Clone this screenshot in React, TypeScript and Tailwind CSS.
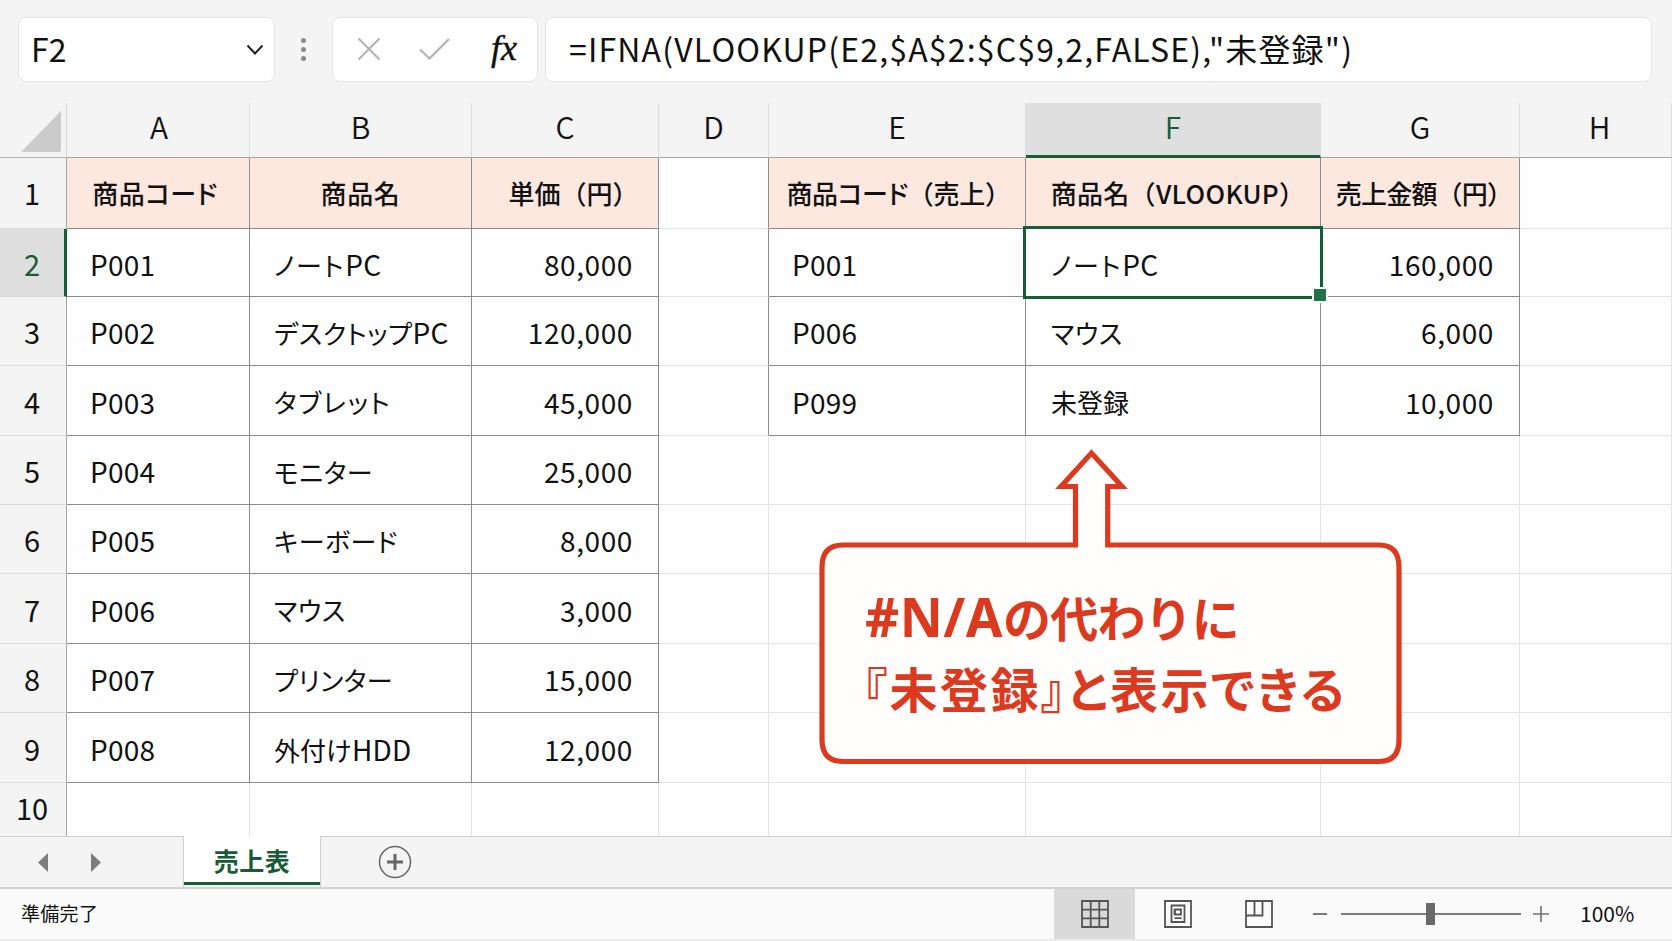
import clsx from "clsx";

type Cell = { text: string; header?: string; right?: boolean };

const columns = ["A", "B", "C", "D", "E", "F", "G", "H"];

const products = [
  ["P001", "ノートPC", "80,000"],
  ["P002", "デスクトップPC", "120,000"],
  ["P003", "タブレット", "45,000"],
  ["P004", "モニター", "25,000"],
  ["P005", "キーボード", "8,000"],
  ["P006", "マウス", "3,000"],
  ["P007", "プリンター", "15,000"],
  ["P008", "外付けHDD", "12,000"],
];

const sales = [
  ["P001", "ノートPC", "160,000"],
  ["P006", "マウス", "6,000"],
  ["P099", "未登録", "10,000"],
];

const productHeads = [
  ["商品コード", "pr-1.5 tracking-[0.5px]"],
  ["商品名", "tracking-[0.6px]"],
  ["単価（円）", "pl-[17px]"],
];
const salesHeads = [
  ["商品コード（売上）", "pl-[3px] tracking-[-0.3px]"],
  ["商品名（VLOOKUP）", "pl-2.5 tracking-[0.3px]"],
  ["売上金額（円）", "pl-2 tracking-[-0.8px]"],
];

function getCell(row: number, col: number): Cell | null {
  const left = col < 3;
  const i = left ? col : col - 4;
  if (i < 0 || i > 2) return null;
  if (row === 1) {
    const [text, header] = (left ? productHeads : salesHeads)[i];
    return { text, header };
  }
  const text = (left ? products : sales)[row - 2]?.[i];
  return text ? { text, right: i === 2 } : null;
}

// Katakana is set proportionally, latin runs a little larger than kanji
function CellText({ text, header, right }: Cell) {
  return (
    <span>
      {text.split(/([\x20-\x7e]+|[ァ-ー]+)/).map((part, i) => {
        if (/^[ァ-ー]/.test(part)) {
          return (
            <span
              key={i}
              className={clsx(
                "[font-feature-settings:'palt']",
                !header && (part.endsWith("ト") ? "tracking-[1.7px]" : "tracking-[0.5px]")
              )}
            >
              {part}
            </span>
          );
        }
        if (!header && /^[\x20-\x7e]/.test(part)) {
          return (
            <span key={i} className={clsx("text-[28px]", right ? "tracking-[0.6px]" : "tracking-[0.2px]")}>
              {part}
            </span>
          );
        }
        return part;
      })}
    </span>
  );
}

function FormulaBar() {
  return (
    <div className="flex h-[103px] items-start pt-[17px] pl-[18px] text-[32px]">
      <div className="flex h-[65px] w-[257px] items-center justify-between rounded-lg border border-[#e4e4e4] bg-white pr-2.5 pl-3">
        <span className="pb-[3px] text-[32px]">F2</span>
        <svg width="18" height="12" viewBox="0 0 18 12" fill="none">
          <path d="M1.5 1.5 9 9.5l7.5-8" stroke="#222" strokeWidth="2" />
        </svg>
      </div>
      <div className="flex h-[65px] w-[57px] flex-col items-center justify-center gap-1">
        <i className="size-[5px] rounded-full bg-[#8a8a8a]" />
        <i className="size-[5px] rounded-full bg-[#8a8a8a]" />
        <i className="size-[5px] rounded-full bg-[#8a8a8a]" />
      </div>
      <div className="flex h-[65px] w-[206px] items-center rounded-lg border border-[#e4e4e4] bg-white pb-0.5 pl-6">
        <svg width="24" height="24" viewBox="0 0 24 24" fill="none">
          <path d="M1.500 1.500l21 21M22.500 1.500l-21 21" stroke="#b3b3b3" strokeWidth="2" />
        </svg>
        <svg className="ml-[38px]" width="31" height="24" viewBox="0 0 31 24" fill="none">
          <path d="M1 12.500l9.500 9L30 2" stroke="#b3b3b3" strokeWidth="2.200" />
        </svg>
        <span className="mb-0.5 ml-[41px] font-['Liberation_Serif',serif] text-[36px] leading-none italic [-webkit-text-stroke:0.4px]">
          fx
        </span>
      </div>
      <div className="ml-[7px] flex h-[65px] w-[1107px] items-center rounded-lg border border-[#e4e4e4] bg-white pb-[3px] pl-[23px]">
        <span className="tracking-[1.17px] whitespace-nowrap">
          =IFNA(VLOOKUP(E2,$A$2:$C$9,2,FALSE),"未登録")
        </span>
      </div>
    </div>
  );
}

function ColumnHeads() {
  return (
    <>
      <div className="flex items-end justify-end border-r border-b border-r-[#d4d4d4] border-b-[#b5b5b5] pr-[5px] pb-[5px]">
        <svg width="40" height="41" viewBox="0 0 40 41">
          <path d="M40 0v39.500q0 1.500-1.500 1.500H0z" fill="#cbcbcb" />
        </svg>
      </div>
      {columns.map((name) => (
        <div
          key={name}
          className={clsx(
            "flex items-center justify-center border-r border-r-[#dcdcdc] pb-[7px] text-[30px] font-[350]",
            name === "F"
              ? "border-b-[3px] border-b-[#185c37] bg-[#dfdfdf] pt-0.5 text-[#185c37]"
              : "border-b border-b-[#a6a6a6]",
            name === "A" && "pl-0.5",
            name === "H" && "pl-2"
          )}
        >
          {name}
        </div>
      ))}
    </>
  );
}

function Row({ row }: { row: number }) {
  const selectedRow = row === 2;
  return (
    <>
      <div
        className={clsx(
          "flex items-center justify-center border-b border-b-[#dcdcdc] text-[29px]",
          selectedRow
            ? "border-r-[3px] border-r-[#185c37] bg-[#dfdfdf] text-[#185c37]"
            : "border-r border-r-[#a6a6a6] pr-0.5",
          row === 1 && "pb-0.5",
          row === 10 ? "border-b-0 pb-1" : "pt-0.5"
        )}
      >
        {row}
      </div>
      {columns.map((name, col) => {
        const cell = getCell(row, col);
        const selected = selectedRow && name === "F";
        const darkRight = cell || getCell(row, col + 1);
        return (
          <div
            key={name}
            className={clsx(
              "relative flex items-center border-r border-b whitespace-nowrap",
              darkRight ? "border-r-[#8c8c8c]" : "border-r-[#e4e4e4]",
              cell ? "border-b-[#8c8c8c]" : "border-b-[#e4e4e4]",
              row === 10 && "border-b-0",
              cell?.header
                ? "justify-center bg-[#fce8df] pb-0.5 text-[26px] font-medium"
                : "bg-[#fefefe] pt-0.5 pr-[25px] text-[26px]",
              cell?.header,
              !cell?.header && (name === "F" ? "pl-[25px]" : name === "B" ? "pl-6" : "pl-[23px]"),
              cell?.right && "justify-end"
            )}
          >
            {cell && <CellText {...cell} />}
            {selected && (
              <div className="absolute -top-[3px] -right-[3px] -bottom-[3px] -left-[3px] z-10 border-[3px] border-[#185c37]">
                <div className="absolute -right-[8px] -bottom-[7px] size-4 border-2 border-white bg-[#217346]" />
              </div>
            )}
          </div>
        );
      })}
    </>
  );
}

function Callout() {
  return (
    <div className="absolute top-[346px] left-[819px] h-[316px] w-[584px] text-[#dc3a1f]">
      <svg className="absolute inset-0" width="584" height="316" viewBox="0 0 584 316">
        <path
          d="M24 96H256.500V37.500H242L272.500 4L303 37.500H288.700V96H560Q580 96 580 118V291Q580 312.500 560 312.500H24Q3 312.500 3 291V118Q3 96 24 96Z"
          fill="#fffefd"
          stroke="currentColor"
          strokeWidth="5.200"
        />
      </svg>
      <div className="absolute top-[132px] left-[46px] text-[48px] leading-[70px] font-bold whitespace-nowrap">
        <p className="tracking-[-0.8px]">
          <span className="font-['Noto_Sans',sans-serif] text-[53px] tracking-[0.5px]">#N/A</span>
          の代わりに
        </p>
        <p className="-ml-0.5 tracking-[2.500px] [font-feature-settings:'palt']">『未登録』と表示できる</p>
      </div>
    </div>
  );
}

function SheetTabs() {
  return (
    <div className="flex h-[53px] border-b-2 border-[#d2d2d2]">
      <div className="flex w-[184px] items-center gap-[43px] border-t border-r border-[#cfcfcf] pl-[38px]">
        <svg width="10" height="19" viewBox="0 0 10 19">
          <path d="M10 0v19L0 9.500z" fill="#7d7d7d" />
        </svg>
        <svg width="10" height="19" viewBox="0 0 10 19">
          <path d="M0 0v19l10-9.500z" fill="#7d7d7d" />
        </svg>
      </div>
      <div className="flex h-[49px] w-[136px] items-center justify-center border-b-[3px] border-[#185c37] bg-white pt-[3px] text-[25px] font-bold tracking-[0.5px] text-[#185c37]">
        売上表
      </div>
      <div className="flex flex-1 items-center border-t border-l border-[#cfcfcf] pl-[57px]">
        <svg width="34" height="34" viewBox="0 0 34 34" fill="none" stroke="#666">
          <circle cx="17" cy="17" r="15.500" strokeWidth="1.500" />
          <path d="M17 9v16M9 17h16" strokeWidth="3" />
        </svg>
      </div>
    </div>
  );
}

function StatusBar() {
  return (
    <div className="flex h-[52px] items-center border-b-2 border-[#ebebeb] bg-[#fafafa] pl-[21px]">
      <span className="w-[1033px] pb-0.5 text-[19px] tracking-[0.3px]">準備完了</span>
      <div className="flex h-full w-[81px] items-center justify-center bg-[#dadada]">
        <svg width="28" height="28" viewBox="0 0 28 28" fill="none" stroke="#555" strokeWidth="1.800">
          <path d="M1 1h26v26H1zM1 9.700h26M1 18.300h26M9.700 1v26M18.300 1v26" />
        </svg>
      </div>
      <svg className="ml-[29px]" width="28" height="28" viewBox="0 0 28 28" fill="none" stroke="#555" strokeWidth="1.800">
        <path d="M1 1h26v26H1zM7.500 5.500h13v16.500h-13zM11 9.500h6v5h-6zM10.500 9v6M10.500 18.200h7" />
      </svg>
      <svg className="ml-[53px]" width="28" height="28" viewBox="0 0 28 28" fill="none" stroke="#555" strokeWidth="1.800">
        <path d="M1 1h26v26H1zM1 15.500h16.500V1M9.500 1v14.500" />
      </svg>
      <i className="ml-10 h-0.5 w-[14px] bg-[#7a7a7a]" />
      <div className="relative ml-[14px] h-0.5 w-[180px] bg-[#7a7a7a]">
        <i className="absolute -top-[10px] left-[85px] h-[22px] w-[9px] bg-[#696969]" />
      </div>
      <svg className="ml-[12px]" width="16" height="16" viewBox="0 0 16 16" stroke="#707070" strokeWidth="1.600">
        <path d="M8 0v16M0 8h16" />
      </svg>
      <span className="ml-[31px] text-[21px]">100%</span>
    </div>
  );
}

export default function App() {
  return (
    <div className="h-[941px] w-[1672px] overflow-hidden bg-[#f4f4f4] font-['Noto_Sans_CJK_JP',sans-serif] text-[#111]">
      <FormulaBar />
      <main className="relative grid h-[733px] grid-cols-[67px_183px_222px_187px_110px_257px_295px_199px_152px] grid-rows-[55px_71px_68px_69px_70px_69px_69px_70px_69px_70px_53px]">
        <ColumnHeads />
        {[1, 2, 3, 4, 5, 6, 7, 8, 9, 10].map((row) => (
          <Row key={row} row={row} />
        ))}
        <Callout />
      </main>
      <SheetTabs />
      <StatusBar />
    </div>
  );
}
